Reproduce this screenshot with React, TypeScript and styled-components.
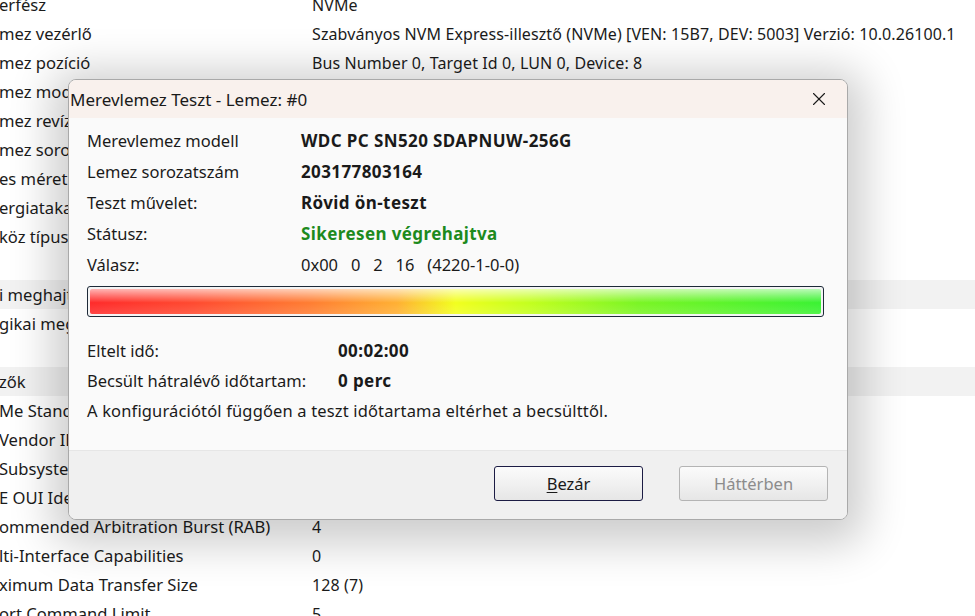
import React from 'react';
import styled, { createGlobalStyle } from 'styled-components';
import { X } from 'lucide-react';

const GlobalStyle = createGlobalStyle`
  html, body {
    margin: 0;
    padding: 0;
    background: #ffffff;
    overflow: hidden;
  }
  body {
    font-family: "Noto Sans", "DejaVu Sans", sans-serif;
    color: #1b1b1b;
  }
`;

const Page = styled.div`
  position: relative;
  width: 975px;
  height: 616px;
  overflow: hidden;
  background: #ffffff;
`;

const PropertyList = styled.div`
  display: flex;
  flex-direction: column;
  margin-top: -10px;
`;

const PropertyRow = styled.div<{ $group?: boolean }>`
  display: grid;
  grid-template-columns: 312px 1fr;
  align-items: center;
  height: 29px;
  font-size: 16px;
  white-space: nowrap;
  background: ${(p) => (p.$group ? '#f2f2f2' : 'transparent')};
`;

const PropertyLabel = styled.span`
  margin-left: -1px;
  font-size: 16.6px;
  overflow: hidden;
`;

const PropertyValue = styled.span`
  overflow: hidden;
  letter-spacing: 0.1px;
`;

const Dialog = styled.div`
  position: absolute;
  left: 68px;
  top: 79px;
  width: 780px;
  height: 441px;
  box-sizing: border-box;
  display: flex;
  flex-direction: column;
  border: 1px solid #a9a9a9;
  border-radius: 8px;
  background: #fafafa;
  overflow: hidden;
  box-shadow: 0 8px 44px 16px rgba(0, 0, 0, 0.2);
`;

const TitleBar = styled.div`
  display: flex;
  align-items: center;
  justify-content: space-between;
  height: 38px;
  padding: 0 17px 0 1px;
  background: #f9f1ed;
  font-size: 17px;
  color: #1a1a1a;
`;

const CloseButton = styled.span`
  display: flex;
  align-items: center;
  color: #1a1a1a;
`;

const DialogBody = styled.div`
  flex: 1;
  display: flex;
  flex-direction: column;
  padding: 7px 23px 0 18px;
  border-bottom: 1px solid #e6e6e6;
`;

const InfoGrid = styled.div<{ $labelWidth: number; $rowHeight: number }>`
  display: grid;
  grid-template-columns: ${(p) => p.$labelWidth}px 1fr;
  grid-auto-rows: ${(p) => p.$rowHeight}px;
  align-items: center;
  font-size: 16.5px;
  white-space: nowrap;
`;

const InfoLabel = styled.span`
  color: #1a1a1a;
`;

const InfoValue = styled.span<{ $bold?: boolean; $color?: string }>`
  font-weight: ${(p) => (p.$bold ? 700 : 400)};
  font-size: ${(p) => (p.$bold ? '17px' : '16.5px')};
  letter-spacing: ${(p) => (p.$bold ? '0.4px' : '0')};
  color: ${(p) => p.$color || '#1a1a1a'};
  white-space: pre;
`;

const ProgressFrame = styled.div`
  margin-top: 6px;
  height: 31px;
  box-sizing: border-box;
  border: 1px solid #1d2a38;
  border-radius: 3px;
  padding: 2px;
  background: #f4f4f4;
`;

const ProgressFill = styled.div`
  height: 100%;
  border-radius: 2px;
  background:
    linear-gradient(
      to bottom,
      rgba(255, 255, 255, 0.65) 0%,
      rgba(255, 255, 255, 0.35) 25%,
      rgba(255, 255, 255, 0) 55%,
      rgba(255, 255, 255, 0.12) 100%
    ),
    linear-gradient(
      to right,
      #ff2b2b 0%,
      #ff4a30 14%,
      #ff7d32 30%,
      #ffb033 42%,
      #f2ff1e 50%,
      #c4ff1e 60%,
      #7af524 75%,
      #3af233 100%
    );
`;

const TimeGrid = styled(InfoGrid)`
  margin-top: 18px;
`;

const Note = styled.div`
  height: 30px;
  display: flex;
  align-items: center;
  font-size: 16.5px;
  letter-spacing: 0.15px;
  color: #1a1a1a;
  white-space: nowrap;
`;

const Footer = styled.div`
  display: flex;
  justify-content: flex-end;
  align-items: flex-start;
  gap: 36px;
  height: 68px;
  box-sizing: border-box;
  padding: 15px 19px 0 0;
  background: #f0f0f0;
`;

const Button = styled.button<{ $primary?: boolean }>`
  width: 149px;
  height: 35px;
  box-sizing: border-box;
  border-radius: 3px;
  font-family: "Noto Sans", "DejaVu Sans", sans-serif;
  font-size: 16.5px;
  border: 1px solid ${(p) => (p.$primary ? '#1c1c44' : '#b4b4b4')};
  color: ${(p) => (p.$primary ? '#1a1a1a' : '#8c8c8c')};
  background: linear-gradient(to bottom, #fbfbfb 0%, #f1f1f1 50%, #e6e6e6 100%);
  padding: 0;
`;

const Mnemonic = styled.span`
  text-decoration: underline;
  text-underline-offset: 2px;
`;

type Prop = { label: string; value: string; group?: boolean };

const properties: Prop[] = [
  { label: 'erfész', value: 'NVMe' },
  { label: 'mez vezérlő', value: 'Szabványos NVM Express-illesztő (NVMe) [VEN: 15B7, DEV: 5003] Verzió: 10.0.26100.1' },
  { label: 'mez pozíció', value: 'Bus Number 0, Target Id 0, LUN 0, Device: 8' },
  { label: 'mez modell', value: 'WDC PC SN520 SDAPNUW-256G' },
  { label: 'mez revízió', value: '20260012' },
  { label: 'mez sorozatszám', value: '203177803164' },
  { label: 'es méret', value: '256 GB' },
  { label: 'ergiatakarékosság', value: 'Támogatott' },
  { label: 'köz típus', value: 'SSD' },
  { label: '', value: '' },
  { label: 'i meghajtók', value: '', group: true },
  { label: 'gikai meghajtó', value: 'C:' },
  { label: '', value: '' },
  { label: 'zők', value: '', group: true },
  { label: 'Me Standard', value: '1.3' },
  { label: 'Vendor ID', value: '15B7' },
  { label: 'Subsystem', value: '5003' },
  { label: 'E OUI Identifier', value: '001B44' },
  { label: 'ommended Arbitration Burst (RAB)', value: '4' },
  { label: 'lti-Interface Capabilities', value: '0' },
  { label: 'ximum Data Transfer Size', value: '128 (7)' },
  { label: 'ort Command Limit', value: '5' },
];

export default function App() {
  return (
    <Page>
      <GlobalStyle />
      <PropertyList>
        {properties.map((p, i) => (
          <PropertyRow key={i} $group={p.group}>
            <PropertyLabel>{p.label}</PropertyLabel>
            <PropertyValue>{p.value}</PropertyValue>
          </PropertyRow>
        ))}
      </PropertyList>

      <Dialog>
        <TitleBar>
          <span>Merevlemez Teszt - Lemez: #0</span>
          <CloseButton>
            <X size={22} strokeWidth={1.2} />
          </CloseButton>
        </TitleBar>
        <DialogBody>
          <InfoGrid $labelWidth={214} $rowHeight={31}>
            <InfoLabel>Merevlemez modell</InfoLabel>
            <InfoValue $bold>WDC PC SN520 SDAPNUW-256G</InfoValue>
            <InfoLabel>Lemez sorozatszám</InfoLabel>
            <InfoValue $bold>203177803164</InfoValue>
            <InfoLabel>Teszt művelet:</InfoLabel>
            <InfoValue $bold>Rövid ön-teszt</InfoValue>
            <InfoLabel>Státusz:</InfoLabel>
            <InfoValue $bold $color="#1d8a1d">Sikeresen végrehajtva</InfoValue>
            <InfoLabel>Válasz:</InfoLabel>
            <InfoValue>{'0x00   0   2   16   (4220-1-0-0)'}</InfoValue>
          </InfoGrid>
          <ProgressFrame>
            <ProgressFill style={{ width: '100%' }} />
          </ProgressFrame>
          <TimeGrid $labelWidth={251} $rowHeight={30}>
            <InfoLabel>Eltelt idő:</InfoLabel>
            <InfoValue $bold>00:02:00</InfoValue>
            <InfoLabel>Becsült hátralévő időtartam:</InfoLabel>
            <InfoValue $bold>0 perc</InfoValue>
          </TimeGrid>
          <Note>A konfigurációtól függően a teszt időtartama eltérhet a becsülttől.</Note>
        </DialogBody>
        <Footer>
          <Button $primary>
            <Mnemonic>B</Mnemonic>ezár
          </Button>
          <Button disabled>Háttérben</Button>
        </Footer>
      </Dialog>
    </Page>
  );
}
